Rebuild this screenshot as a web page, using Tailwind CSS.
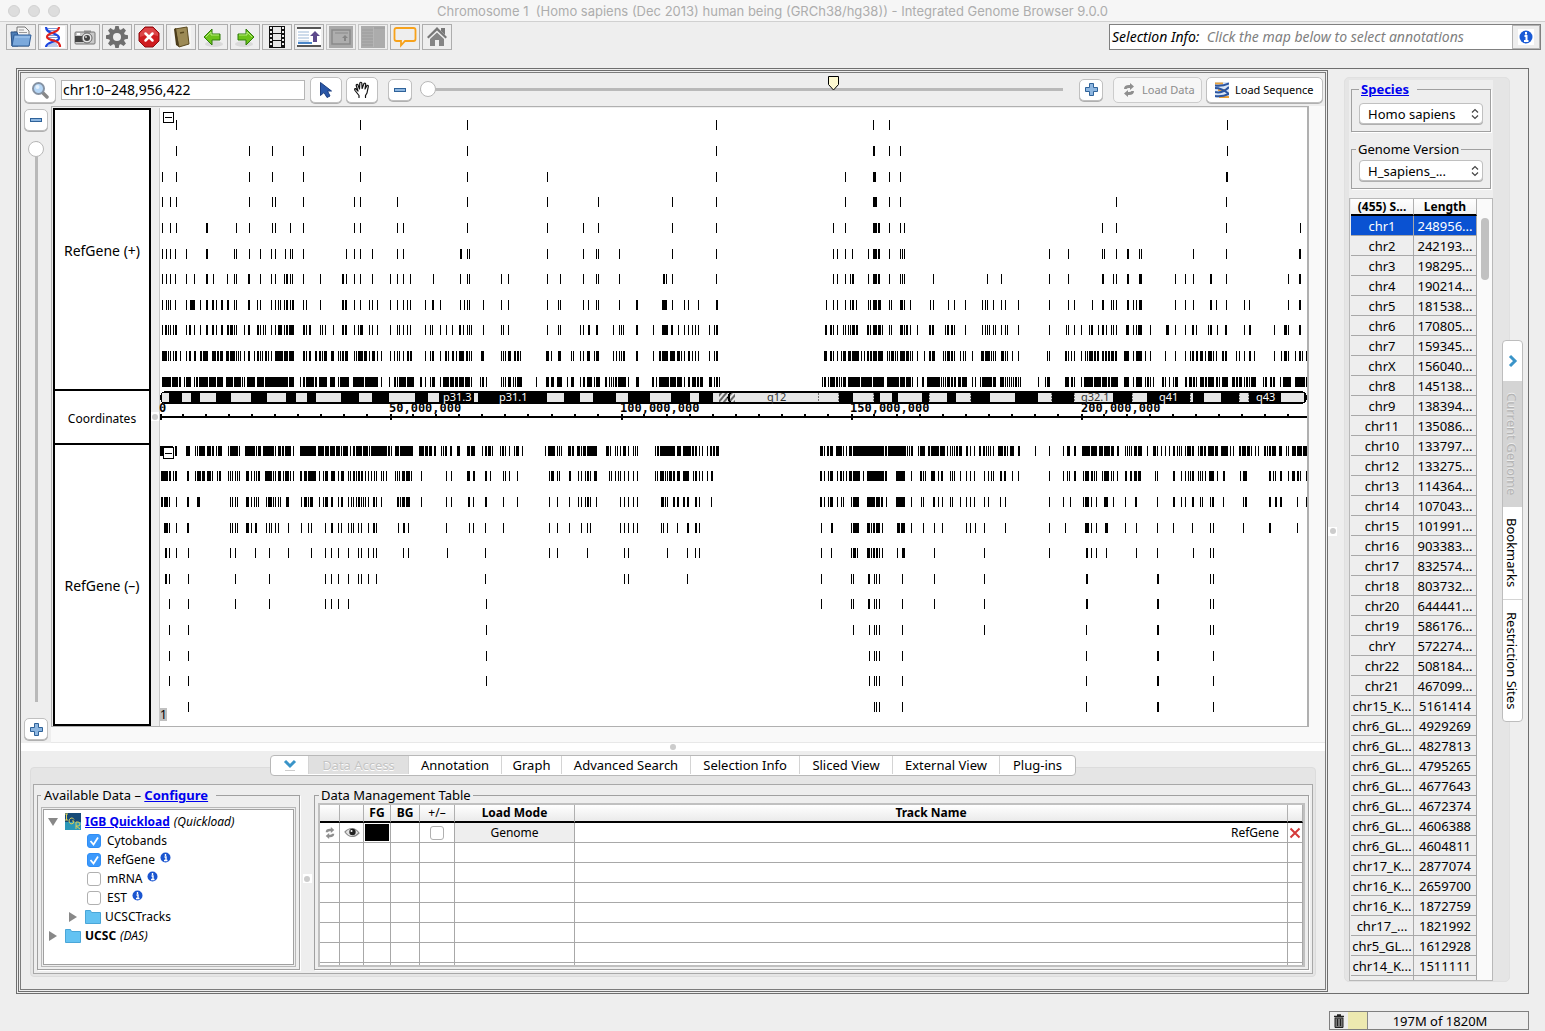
<!DOCTYPE html>
<html lang="en">
<head>
<meta charset="utf-8">
<title>Integrated Genome Browser 9.0.0</title>
<script src="https://cdn.jsdelivr.net/npm/@tailwindcss/browser@4"></script>
</head>
<body class="flex h-screen flex-col overflow-hidden bg-[#eeeeee] font-['Noto_Sans',sans-serif] text-[13px] leading-4 text-black">

<!-- Title bar -->
<header class="flex h-[22px] shrink-0 items-center border-b border-[#d0d0d0] bg-[#f6f6f6]">
  <div class="flex w-24 gap-2 pl-2">
    <span class="size-3 rounded-full border border-[#d2d2d2] bg-[#dddddd]"></span>
    <span class="size-3 rounded-full border border-[#d2d2d2] bg-[#dddddd]"></span>
    <span class="size-3 rounded-full border border-[#d2d2d2] bg-[#dddddd]"></span>
  </div>
  <h1 class="flex-1 whitespace-pre text-center font-['Inter',sans-serif] text-[13px] text-[#adadad]">Chromosome 1  (Homo sapiens (Dec 2013) human being (GRCh38/hg38)) - Integrated Genome Browser 9.0.0</h1>
  <div class="w-24"></div>
</header>

<!-- Main toolbar -->
<div class="flex h-[46px] shrink-0 items-start justify-between pt-[2px] pr-1 pl-[6px]">
  <nav class="flex gap-[2px]" aria-label="Main toolbar">
    <button aria-label="Open file" class="grid h-[26px] w-[30px] place-items-center border border-[#adadad]">
      <svg width="24" height="22" viewBox="0 0 24 22"><path d="M3 20V8l2-2h3V1h8l4 4v15z" fill="#f4f4f4" stroke="#777"/><path d="M10 4h5M10 6.500h8" stroke="#999"/><path d="M2 6h6l1 3v11H3z" fill="#4d7db5" stroke="#2c5488"/><path d="M5 9h17l-2 11H3z" fill="#7ba9dc" stroke="#2f5e9a"/><path d="M6 11h15" stroke="#a9cbef"/></svg>
    </button>
    <button aria-label="Load sequence" class="grid h-[26px] w-[30px] place-items-center border border-[#adadad]">
      <svg width="24" height="22" viewBox="0 0 24 22"><path d="M0 0h24v22H0z" fill="#fff"/><path d="M6 2.500h12M7 4.500h9M7 9.500h9M6 11.500h11M7 13.500h7M8 18h8M6 20h11" stroke="#7f9ad4"/><path d="M5 1c0 4 3 5 6 6s7 2 7 5-4 3-7 4-6 2-6 5" fill="none" stroke="#1c46e0" stroke-width="2.200"/><path d="M18 1c0 4-4 5-7 6s-5 2-5 4 4 3 8 4 5 3 5 6" fill="none" stroke="#e0201c" stroke-width="2.200"/></svg>
    </button>
    <button aria-label="Save image" class="grid h-[26px] w-[30px] place-items-center border border-[#adadad]">
      <svg width="24" height="22" viewBox="0 0 24 22"><rect x="2" y="6" width="20" height="12" rx="1" fill="#c9c9c9" stroke="#777"/><rect x="2" y="10" width="9" height="6" fill="#444"/><rect x="11" y="4.500" width="7" height="2" fill="#888"/><circle cx="14" cy="12" r="5" fill="#e8e8e8" stroke="#666"/><circle cx="14" cy="12" r="3" fill="#444"/><circle cx="13" cy="11" r="1" fill="#ccc"/><rect x="4" y="7" width="3" height="2" fill="#fff"/></svg>
    </button>
    <button aria-label="Preferences" class="grid h-[26px] w-[30px] place-items-center border border-[#adadad]">
      <svg width="24" height="24" viewBox="-12 -12 24 24"><g fill="#6f6f6f"><circle r="8"/><g id="teeth"><path d="M-2.500-7l.8-4h3.400l.8 4zM-2.500 7l.8 4h3.400l.8-4zM-7-2.500l-4 .8v3.400l4 .8zM7-2.500l4 .8v3.400l-4 .8z"/></g><use href="#teeth" transform="rotate(45)"/></g><circle r="4" fill="#eee"/></svg>
    </button>
    <button aria-label="Stop" class="grid h-[26px] w-[30px] place-items-center border border-[#adadad]">
      <svg width="22" height="22" viewBox="0 0 22 22"><path d="M7 1h8l6 6v8l-6 6H7l-6-6V7z" fill="#cf1c20" stroke="#8d0e12"/><path d="M7 2h8l5 5v3q-9-3-18 1V7z" fill="#dc4548"/><path d="M7.500 7.500l7 7m0-7l-7 7" stroke="#fff" stroke-width="2.500" stroke-linecap="round"/></svg>
    </button>
    <button aria-label="Bookmarks" class="grid h-[26px] w-[30px] place-items-center border border-[#adadad]">
      <svg width="24" height="22" viewBox="0 0 24 22"><path d="M2 0h20v22H2z" fill="#f6f6f4"/><path d="M6 3l12-2 2 17-10 3z" fill="#9c8a55" stroke="#5b4a1f"/><path d="M5 3l2-1 3 19-3-2z" fill="#4c3d1a"/><path d="M11 7l4-.8" stroke="#5b4a1f" stroke-width="1.500"/></svg>
    </button>
    <button aria-label="Back" class="grid h-[26px] w-[30px] place-items-center border border-[#adadad]">
      <svg width="24" height="22" viewBox="0 0 24 22"><ellipse cx="13" cy="18" rx="9" ry="3" fill="#d9d9d9"/><path d="M3 11l8-8v5h8v6h-8v5z" fill="#6cc31a" stroke="#2f7d0a" stroke-linejoin="round"/><path d="M5 11l5-5v3h8" fill="none" stroke="#b6ea7a"/></svg>
    </button>
    <button aria-label="Forward" class="grid h-[26px] w-[30px] place-items-center border border-[#adadad]">
      <svg width="24" height="22" viewBox="0 0 24 22"><ellipse cx="11" cy="18" rx="9" ry="3" fill="#d9d9d9"/><path d="M21 11l-8-8v5H5v6h8v5z" fill="#6cc31a" stroke="#2f7d0a" stroke-linejoin="round"/><path d="M6 9h8V6l5 5" fill="none" stroke="#b6ea7a"/></svg>
    </button>
    <button aria-label="Filmstrip" class="grid h-[26px] w-[30px] place-items-center border border-[#adadad]">
      <svg width="20" height="22" viewBox="0 0 20 22"><path d="M2 0h16v22H2z" fill="#111"/><path d="M6 1h8v6H6zM6 8h8v6H6zM6 15h8v6H6z" fill="#e8e8e8"/><path d="M4 1v20M16 1v20" stroke="#eee" stroke-width="2" stroke-dasharray="2 2"/></svg>
    </button>
    <button aria-label="Tracks up" class="grid h-[26px] w-[30px] place-items-center border border-[#adadad]">
      <svg width="24" height="22" viewBox="0 0 24 22"><path d="M0 1h24v20H0z" fill="#fff"/><path d="M0 2h24M0 20h24" stroke="#555" stroke-width="2"/><path d="M1 6h11M1 9h11M1 12h11M1 15h11" stroke="#9db8d6"/><path d="M1 17h14" stroke="#4a86c8" stroke-width="2"/><path d="M18 5l5 5h-3v6h-4v-6h-3z" fill="#5d4a8c"/></svg>
    </button>
    <button disabled aria-label="Expand window" class="grid h-[26px] w-[30px] place-items-center border border-[#c4c4c4]">
      <svg width="24" height="22" viewBox="0 0 24 22"><path d="M0 0h24v22H0z" fill="#a9a9a9"/><path d="M3 4h18v14H3z" fill="#aeaeae" stroke="#8a8a8a" stroke-width="1.500"/><path d="M6 7h13" stroke="#8a8a8a"/><path d="M16 9l3 3h-2v3h-2v-3h-2z" fill="#858585"/></svg>
    </button>
    <button disabled aria-label="Side panel" class="grid h-[26px] w-[30px] place-items-center border border-[#c4c4c4]">
      <svg width="24" height="22" viewBox="0 0 24 22"><path d="M0 0h24v22H0z" fill="#acacac"/><path d="M1 4h11M1 7h11M1 10h11M1 13h11M1 16h11M1 19h11" stroke="#9c9c9c"/><path d="M12.500 1v20" stroke="#b6b6b6"/><path d="M13 2h11" stroke="#9c9c9c"/></svg>
    </button>
    <button aria-label="Feedback" class="grid h-[26px] w-[30px] place-items-center border border-[#adadad]">
      <svg width="24" height="22" viewBox="0 0 24 22"><path d="M3.500 2h17q2 0 2 2v9q0 2-2 2H12l-4 4.500v-4.500H3.500q-2 0-2-2v-9q0-2 2-2z" fill="none" stroke="#f7a21b" stroke-width="1.800"/></svg>
    </button>
    <button aria-label="Home" class="grid h-[26px] w-[30px] place-items-center border border-[#adadad]">
      <svg width="22" height="22" viewBox="0 0 22 22"><path d="M11 1l10 10-1.500 1.500L11 4.500l-8.500 8L1 11z" fill="#777"/><path d="M15 2h4v7l-4-4z" fill="#777"/><path d="M4 13l7-6.500 7 6.500v7h-5v-6H9v6H4z" fill="#858585"/></svg>
    </button>
  </nav>
  <div class="flex h-[26px] w-[432px] border border-[#808080] bg-white">
    <p class="flex-1 self-center whitespace-pre pl-[2px] text-[14px] italic">Selection Info:  <span class="text-[#808080]">Click the map below to select annotations</span></p>
    <button aria-label="Info" class="grid w-7 place-items-center border border-[#b4b4b4] bg-[#eeeeee]">
      <svg width="16" height="16" viewBox="0 0 16 16"><path d="M0 0h16v16H0z" fill="#fff"/><circle cx="8" cy="8" r="6.500" fill="#1a5bd6" /><path d="M8 3v2.500M6.500 7h2v4M6 12h4.500" stroke="#fff" stroke-width="2" fill="none"/></svg>
    </button>
  </div>
</div>

<main class="mr-4 ml-4 flex min-h-0 flex-1 border border-[#6e6e6e]">
  <!-- Map and data panes -->
  <section class="my-px ml-px flex min-w-0 flex-1 border border-[#6e6e6e] p-px">
    <div class="flex min-w-0 flex-1 flex-col border border-[#7c7c7c]">
      <!-- Navigation row -->
      <div class="flex h-[33px] shrink-0 items-center pr-[2px] pl-[3px]">
        <button aria-label="Search" class="grid h-[26px] w-8 place-items-center rounded-[5px] border border-[#c0c0c0] bg-white shadow-[0_1px_0_#b0b0b0]">
          <svg width="18" height="18" viewBox="0 0 18 18"><path d="M11 11l5 5" stroke="#888" stroke-width="3.500" stroke-linecap="round"/><circle cx="7.500" cy="7.500" r="5.500" fill="#b5d6f6" stroke="#8592a3" stroke-width="2"/><circle cx="6.500" cy="6" r="2" fill="#e5f1fc"/></svg>
        </button>
        <input aria-label="Location" value="chr1:0–248,956,422" class="ml-[5px] h-5 w-[244px] border border-[#b5b5b5] bg-white px-px text-[14px]">
        <button aria-label="Select mode" class="ml-[5px] grid h-[26px] w-8 place-items-center rounded-[5px] border border-[#c0c0c0] bg-white shadow-[0_1px_0_#b0b0b0]">
          <svg width="14" height="18" viewBox="0 0 14 18"><path d="M1.500 1.500v13l3.500-3 3 5 3-1.500-2.500-5h4z" fill="#2a57a8" stroke="#1c3f80"/></svg>
        </button>
        <button aria-label="Scroll mode" class="ml-1 grid h-[26px] w-8 place-items-center rounded-[5px] border border-[#c0c0c0] bg-white shadow-[0_1px_0_#b0b0b0]">
          <svg width="18" height="18" viewBox="0 0 18 18" fill="none" stroke="#111" stroke-width="1.200" stroke-linejoin="round" stroke-linecap="round"><path d="M6 16.500v-2L2 9.500q-1-2 .5-2L5 10 3.200 4.500q0-1.500 1.600-1L6.500 8 6.800 2q1-1.500 2 0l.3 5.500L11 2.500q1.500-1 1.700.8L12 8l2-3.500q1.500-.5 1.300 1.200L14 12l-1.500 2.500v2"/></svg>
        </button>
        <button aria-label="Zoom out" class="ml-[10px] grid h-[22px] w-6 place-items-center rounded-[5px] border border-[#c0c0c0] bg-white shadow-[0_1px_0_#b0b0b0]">
          <svg width="12" height="4"><rect x=".5" y=".5" width="11" height="3" fill="#8db6e0" stroke="#2f6299"/></svg>
        </button>
        <div class="relative ml-2 flex h-full flex-1 items-center">
          <input type="range" aria-label="Horizontal zoom" value="0" class="h-4 w-full appearance-none bg-transparent [&::-webkit-slider-runnable-track]:h-[3px] [&::-webkit-slider-runnable-track]:bg-[#b9b9b9] [&::-webkit-slider-thumb]:-mt-[7px] [&::-webkit-slider-thumb]:size-4 [&::-webkit-slider-thumb]:appearance-none [&::-webkit-slider-thumb]:rounded-full [&::-webkit-slider-thumb]:border [&::-webkit-slider-thumb]:border-[#b8b8b8] [&::-webkit-slider-thumb]:bg-white">
          <svg class="absolute top-[3px] left-[63.4%]" width="12" height="16" viewBox="0 0 12 16"><path d="M.5.500h10v8l-5 5.500-5-5.500z" fill="#fdf9d0" stroke="#000"/></svg>
        </div>
        <button aria-label="Zoom in" class="ml-4 grid h-[22px] w-6 place-items-center rounded-[5px] border border-[#c0c0c0] bg-white shadow-[0_1px_0_#b0b0b0]">
          <svg width="13" height="13"><path d="M4.500.500h4v4h4v4h-4v4h-4v-4h-4v-4h4z" fill="#8db6e0" stroke="#2f6299"/></svg>
        </button>
        <button disabled class="ml-[10px] flex h-[26px] w-[89px] items-center gap-[6px] rounded-[5px] border border-[#cccccc] bg-[#f6f6f6] pl-2 text-[11px] text-[#8c8c8c]">
          <svg width="14" height="14" viewBox="0 0 14 14"><path d="M2 6Q2 2 7 2h1V0l4 3.500L8 7V5H7Q5 5 4.500 6zM12 8q0 4-5 4H6v2l-4-3.500L6 7v2h1q2 0 2.500-1z" fill="#8f8f8f"/></svg>
          <span class="whitespace-nowrap">Load Data</span>
        </button>
        <button class="ml-1 flex h-[26px] w-[117px] items-center gap-[6px] rounded-[5px] border border-[#c0c0c0] bg-white pl-2 text-[11px] shadow-[0_1px_0_#b0b0b0]">
          <svg width="14" height="16" viewBox="0 0 14 16"><path d="M0 0h14v16H0z" fill="#d9e6f7"/><path d="M0 1.500h8M3 8h8M4 15h10" stroke="#eaa13a" stroke-width="2"/><path d="M0 3.500q7 1 14-2M0 6q7 0 14 6M0 10q7 2 14-5M0 14q7 1 14-2" stroke="#2c55a0" stroke-width="2" fill="none"/></svg>
          <span class="whitespace-nowrap">Load Sequence</span>
        </button>
      </div>

      <div class="flex min-h-0 flex-1">
        <!-- Vertical zoom -->
        <div class="flex w-[30px] shrink-0 flex-col items-center pt-[3px] pb-[3px]">
          <button aria-label="Vertical zoom out" class="grid h-[22px] w-6 place-items-center rounded-[5px] border border-[#c0c0c0] bg-white shadow-[0_1px_0_#b0b0b0]">
            <svg width="12" height="4"><rect x=".5" y=".5" width="11" height="3" fill="#8db6e0" stroke="#2f6299"/></svg>
          </button>
          <input type="range" aria-label="Vertical zoom" value="0" class="mt-[10px] mb-4 min-h-0 w-4 flex-1 appearance-none bg-transparent [writing-mode:vertical-lr] [&::-webkit-slider-runnable-track]:w-[3px] [&::-webkit-slider-runnable-track]:bg-[#b9b9b9] [&::-webkit-slider-thumb]:-ml-[7px] [&::-webkit-slider-thumb]:size-4 [&::-webkit-slider-thumb]:appearance-none [&::-webkit-slider-thumb]:rounded-full [&::-webkit-slider-thumb]:border [&::-webkit-slider-thumb]:border-[#b8b8b8] [&::-webkit-slider-thumb]:bg-white">
          <button aria-label="Vertical zoom in" class="grid h-[22px] w-6 shrink-0 place-items-center rounded-[5px] border border-[#c0c0c0] bg-white shadow-[0_1px_0_#b0b0b0]">
            <svg width="13" height="13"><path d="M4.500.500h4v4h4v4h-4v4h-4v-4h-4v-4h4z" fill="#8db6e0" stroke="#2f6299"/></svg>
          </button>
        </div>
        <div class="flex min-w-0 flex-1 flex-col">
          <div class="flex min-h-0 flex-1">
            <div class="flex min-w-0 flex-1 border-t border-r-2 border-b border-l border-[#b0b0b0] pt-px">
              <!-- Track labels -->
              <div class="ml-px flex w-[98px] shrink-0 flex-col">
                <div class="grid flex-[282] place-items-center border-2 border-b-[1px] border-black bg-white pt-[2px] text-[14px]">RefGene (+)</div>
                <div class="grid h-[54px] shrink-0 place-items-center border-2 border-y-[1px] border-black bg-white pt-1 text-[12px]">Coordinates</div>
                <div class="grid flex-[281] place-items-center border-2 border-t-[1px] border-black bg-white pt-[2px] text-[14px]">RefGene (–)</div>
              </div>
              <div class="flex w-[9px] shrink-0 items-center border-r border-[#c8c8c8]">
                <span class="mb-[1px] grid h-[9px] w-2 place-items-center bg-white"><span class="size-[6px] rounded-full bg-[#cccccc]"></span></span>
              </div>
              <!-- Genome map -->
              <div class="relative min-w-0 flex-1 bg-white">
                <svg id="map" class="absolute inset-0 size-full" viewBox="160 108 1147 618" preserveAspectRatio="none" shape-rendering="crispEdges" role="img" aria-label="Gene annotations on chromosome 1">
                  <defs><pattern id="hatch" width="4" height="4" patternUnits="userSpaceOnUse" patternTransform="rotate(40)"><path d="M0 0h2v4H0z" fill="#666"/></pattern></defs>
                  <path id="genes" fill="#000"/>
                  <rect x="160" y="391" width="1147" height="13" rx="6" fill="#000"/>
                  <path id="bands" fill="#e6e6e6"/>
                  <rect x="719" y="393" width="16" height="9" fill="url(#hatch)"/>
                  <path d="M731 392q-5 5.500 0 11" fill="none" stroke="#000" stroke-width="2"/>
                  <path d="M818.500 393v9M838.500 393v9M873.500 393v9M929.500 393v9M970.500 393v9M1051.500 393v9M1074.500 393v9M1132.500 393v9M1190.500 393v9M1239.500 393v9M1248.500 393v9" stroke="#777" stroke-dasharray="2 1"/>
                  <path d="M160 416h1147v2H160z"/>
                  <path id="ticks"/>
                  <path d="M163.500 112.500h10v10h-10zM163.500 447.500h10v11h-10z" fill="#fff" stroke="#000"/>
                  <path d="M165 117.500h7M165 453.500h7" stroke="#000"/>
                </svg>
                <div id="labels"></div>
                <span class="absolute bottom-[5px] left-0 h-[13px] w-[7px] bg-[#c0c0c0] text-[12px] leading-[14px]">1</span>
              </div>
            </div>
            <div class="w-4 shrink-0 bg-[#f9f9f9]"></div>
          </div>
          <div class="h-4 shrink-0 border-b border-[#e8e8e8] bg-[#f9f9f9]"></div>
        </div>
      </div>

      <div class="grid h-2 shrink-0 place-items-center bg-white"><span class="size-[6px] rounded-full bg-[#cccccc]"></span></div>

      <!-- Data access panel -->
      <div class="flex h-[238px] shrink-0 flex-col px-[9px] pt-1 pb-3">
        <div role="tablist" class="z-10 mx-auto flex h-[21px] shrink-0 divide-x divide-[#d4d4d4] overflow-hidden rounded-[4px] border border-[#b8b8b8] bg-white pb-px">
          <button aria-label="Collapse" class="grid w-[38px] place-items-center"><svg width="14" height="14" viewBox="0 0 14 14"><path d="M2 3l5 5 5-5" fill="none" stroke="#3a94c8" stroke-width="3"/><path d="M2 12.500h10" stroke="#ccc"/></svg></button>
          <button role="tab" aria-selected="true" class="w-[100px] bg-[#e0e0e0] text-[#c4c4c4] [text-shadow:0_1px_0_#fff]">Data Access</button>
          <button role="tab" class="w-[93px]">Annotation</button>
          <button role="tab" class="w-[60px]">Graph</button>
          <button role="tab" class="w-[129px]">Advanced Search</button>
          <button role="tab" class="w-[109px]">Selection Info</button>
          <button role="tab" class="w-[93px]">Sliced View</button>
          <button role="tab" class="w-[107px]">External View</button>
          <button role="tab" class="w-[75px]">Plug-ins</button>
        </div>
        <div class="-mt-[9px] flex min-h-0 flex-1 flex-col rounded-[4px] border border-[#dcdcdc] bg-[#e5e5e5] px-[2px] pt-4 pb-[2px]">
          <div class="flex min-h-0 flex-1 border border-[#a8a8a8] bg-[#eeeeee] p-[3px] pt-[2px]">
            <fieldset class="flex w-[263px] shrink-0 flex-col border border-[#a0a0a0] px-[3px] pb-[2px] shadow-[1px_1px_0_#fff]">
              <legend class="whitespace-pre pr-2 pl-[3px]">Available Data – <a href="#" class="font-bold text-[#0000ee] underline">Configure</a></legend>
              <div class="mt-1 flex min-h-0 flex-1 border border-[#b8b8b8] p-px">
                <ul class="flex-1 border border-[#a0a0a0] bg-white pt-[2px] leading-[19px]">
                  <li class="flex h-[19px] items-center pl-1"><svg width="10" height="10"><path d="M0 1h10L5 9z" fill="#888"/></svg>
                    <svg class="ml-[7px]" width="16" height="17" viewBox="0 0 16 17"><path d="M0 0h16v17H0z" fill="#154a78"/><path d="M0 9h16v8H0z" fill="#2a97b8"/><path d="M0 1h3M1.500 1v6M0 7h3M9 6.500q-1-2-3-1.500-2 1-2 3t2 3q3 0 3-3H7M11 16V9h2q2 0 2 2t-2 2h-2l4 3" stroke="#d8cf5a" fill="none"/></svg>
                    <a href="#" class="ml-1 text-[12px] font-bold text-[#0000ee] underline">IGB Quickload</a><i class="ml-1 text-[12px]">(Quickload)</i></li>
                  <li class="flex h-[19px] items-center pl-[43px]"><input id="c1" type="checkbox" checked class="peer size-[14px] appearance-none rounded-[3px] border border-[#b0b0b0] bg-white checked:border-[#2f8df5] checked:bg-[#3c99fc]"><svg class="pointer-events-none -ml-[14px]" width="14" height="14"><path d="M3.500 7l3 3.500 4.500-7" fill="none" stroke="#fff" stroke-width="1.800"/></svg><label for="c1" class="ml-[6px] text-[12px]">Cytobands</label></li>
                  <li class="flex h-[19px] items-center pl-[43px]"><input id="c2" type="checkbox" checked class="peer size-[14px] appearance-none rounded-[3px] border border-[#b0b0b0] bg-white checked:border-[#2f8df5] checked:bg-[#3c99fc]"><svg class="pointer-events-none -ml-[14px]" width="14" height="14"><path d="M3.500 7l3 3.500 4.500-7" fill="none" stroke="#fff" stroke-width="1.800"/></svg><label for="c2" class="ml-[6px] text-[12px]">RefGene</label><svg class="mb-1 ml-[5px]" width="11" height="11"><circle cx="5.500" cy="5.500" r="5" fill="#1a55d0"/><path d="M5.500 2v2M4.500 5h1.500v3M4 8.500h3.500" stroke="#fff" stroke-width="1.400" fill="none"/></svg></li>
                  <li class="flex h-[19px] items-center pl-[43px]"><input id="c3" type="checkbox" class="size-[14px] appearance-none rounded-[3px] border border-[#b0b0b0] bg-white checked:bg-[#3c99fc]"><label for="c3" class="ml-[6px] text-[12px]">mRNA</label><svg class="mb-1 ml-[5px]" width="11" height="11"><circle cx="5.500" cy="5.500" r="5" fill="#1a55d0"/><path d="M5.500 2v2M4.500 5h1.500v3M4 8.500h3.500" stroke="#fff" stroke-width="1.400" fill="none"/></svg></li>
                  <li class="flex h-[19px] items-center pl-[43px]"><input id="c4" type="checkbox" class="size-[14px] appearance-none rounded-[3px] border border-[#b0b0b0] bg-white checked:bg-[#3c99fc]"><label for="c4" class="ml-[6px] text-[12px]">EST</label><svg class="mb-1 ml-[5px]" width="11" height="11"><circle cx="5.500" cy="5.500" r="5" fill="#1a55d0"/><path d="M5.500 2v2M4.500 5h1.500v3M4 8.500h3.500" stroke="#fff" stroke-width="1.400" fill="none"/></svg></li>
                  <li class="flex h-[19px] items-center pl-6 text-[12px]"><svg width="10" height="10"><path d="M1 0v10l8-5z" fill="#888"/></svg><svg class="mr-1 ml-[7px]" width="16" height="14"><path d="M.5.500h5l1 2h9v11H.5z" fill="#63c2f2" stroke="#4aa6d8"/></svg>UCSCTracks</li>
                  <li class="flex h-[19px] items-center pl-1 text-[12px]"><svg width="10" height="10"><path d="M1 0v10l8-5z" fill="#888"/></svg><svg class="mr-1 ml-[7px]" width="16" height="14"><path d="M.5.500h5l1 2h9v11H.5z" fill="#63c2f2" stroke="#4aa6d8"/></svg><b>UCSC</b><i class="ml-1">(DAS)</i></li>
                </ul>
              </div>
            </fieldset>
            <div class="flex w-[14px] shrink-0 items-center justify-center"><span class="grid size-[9px] place-items-center bg-white"><span class="size-[6px] rounded-full bg-[#cccccc]"></span></span></div>
            <fieldset class="flex min-w-0 flex-1 flex-col border border-[#a0a0a0] px-[3px] pb-[2px] shadow-[1px_1px_0_#fff]">
              <legend class="ml-px px-[2px]">Data Management Table</legend>
              <div class="min-h-0 flex-1 overflow-hidden border-2 border-[#c0c0c0] bg-white">
                <table class="w-full table-fixed border-separate border-spacing-0 text-[12px]">
                  <colgroup><col class="w-5"><col class="w-6"><col class="w-[27px]"><col class="w-[29px]"><col class="w-[35px]"><col class="w-[120px]"><col><col class="w-[15px]"></colgroup>
                  <thead><tr class="h-[18px] bg-gradient-to-b from-white to-[#e8e8e8] leading-4">
                    <th class="border-r border-b-2 border-r-[#b0b0b0] border-b-black"></th><th class="border-r border-b-2 border-r-[#b0b0b0] border-b-black"></th><th class="border-r border-b-2 border-r-[#b0b0b0] border-b-black">FG</th><th class="border-r border-b-2 border-r-[#b0b0b0] border-b-black">BG</th><th class="border-r border-b-2 border-r-[#b0b0b0] border-b-black font-normal">+/–</th><th class="border-r border-b-2 border-r-[#b0b0b0] border-b-black">Load Mode</th><th class="border-r border-b-2 border-r-[#b0b0b0] border-b-black">Track Name</th><th class="border-r border-b-2 border-r-[#b0b0b0] border-b-black"></th>
                  </tr></thead>
                  <tbody id="tracks"><tr class="h-5">
                    <td class="border-r border-b border-[#a8a8a8]"><svg class="mx-auto" width="12" height="12" viewBox="0 0 14 14"><path d="M2 6Q2 2 7 2h1V0l4 3.500L8 7V5H7Q5 5 4.500 6zM12 8q0 4-5 4H6v2l-4-3.500L6 7v2h1q2 0 2.500-1z" fill="#8f8f8f"/></svg></td>
                    <td class="border-r border-b border-[#a8a8a8]"><svg class="mx-auto" width="16" height="12" viewBox="0 0 16 12"><path d="M1 5q3-3.500 7-3.500T15 6q-3 3.500-7 3.500T1 5z" fill="#e4e4e4" stroke="#8a8a8a" stroke-width="1.200"/><circle cx="8.500" cy="5" r="3.200" fill="#222"/><circle cx="7.500" cy="4" r="1" fill="#fff"/></svg></td>
                    <td class="border-r border-b border-[#a8a8a8] p-px"><div class="h-[17px] bg-black"></div></td>
                    <td class="border-r border-b border-[#a8a8a8]"></td>
                    <td class="border-r border-b border-[#a8a8a8]"><input type="checkbox" aria-label="Combine strands" class="mx-auto block size-[14px] appearance-none rounded-[3px] border border-[#b0b0b0] bg-white"></td>
                    <td class="border-r border-b border-[#a8a8a8] bg-[#eeeeee] text-center">Genome</td>
                    <td class="border-r border-b border-[#a8a8a8] pr-2 text-right">RefGene</td>
                    <td class="border-r border-b border-[#a8a8a8]"><svg class="mx-auto" width="12" height="12"><path d="M1.500 1.500l9 9m0-9l-9 9" stroke="#d43a3a" stroke-width="2"/></svg></td>
                  </tr></tbody>
                </table>
              </div>
            </fieldset>
          </div>
        </div>
      </div>
    </div>
  </section>

  <div class="flex w-4 shrink-0 items-center"><span class="grid size-[9px] place-items-center bg-white"><span class="size-[6px] rounded-full bg-[#cccccc]"></span></span></div>

  <!-- Current genome panel -->
  <aside class="mt-2 mb-[11px] flex w-[166px] shrink-0 rounded-[5px] border border-[#e0e0e0] bg-[#e5e5e5] pt-[2px] pr-4 pl-1">
    <div class="flex min-w-0 flex-1 flex-col bg-[#eeeeee]">
      <fieldset class="mx-[2px] mt-px h-[51px] border border-[#a0a0a0] px-[7px] pt-[6px] shadow-[1px_1px_0_#fff]">
        <legend class="pr-2 pl-[2px]"><a href="#" class="font-bold text-[#0000ee] underline">Species</a></legend>
        <div class="relative">
          <select aria-label="Species" class="h-[21px] w-full appearance-none rounded-[4px] border border-[#c0c0c0] bg-white pl-2 shadow-[0_1px_0_#b0b0b0]"><option>Homo sapiens</option></select>
          <svg class="pointer-events-none absolute top-[5px] right-[4px]" width="8" height="12"><path d="M1 4.500L4 1.500l3 3M1 7.500l3 3 3-3" fill="none" stroke="#444" stroke-width="1.200"/></svg>
        </div>
      </fieldset>
      <fieldset class="mx-[2px] mt-[9px] h-[48px] border border-[#a0a0a0] px-[7px] pt-[3px] shadow-[1px_1px_0_#fff]">
        <legend class="-ml-[3px] px-[2px]">Genome Version</legend>
        <div class="relative">
          <select aria-label="Genome Version" class="h-[21px] w-full appearance-none rounded-[4px] border border-[#c0c0c0] bg-white pl-2 shadow-[0_1px_0_#b0b0b0]"><option>H_sapiens_...</option></select>
          <svg class="pointer-events-none absolute top-[5px] right-[4px]" width="8" height="12"><path d="M1 4.500L4 1.500l3 3M1 7.500l3 3 3-3" fill="none" stroke="#444" stroke-width="1.200"/></svg>
        </div>
      </fieldset>
      <div class="mt-[9px] flex min-h-0 flex-1 overflow-hidden border border-[#b8b8b8] pl-px">
        <table class="h-fit w-[126px] shrink-0 table-fixed border-separate border-spacing-0 text-center">
          <thead><tr class="h-[17px] bg-gradient-to-b from-white to-[#f0f0f0] text-[12px] leading-[15px]"><th class="border-r border-b-2 border-r-[#b0b0b0] border-b-black">(455) S...</th><th class="border-r border-b-2 border-r-[#b0b0b0] border-b-black">Length</th></tr></thead>
          <tbody id="seqs"></tbody>
        </table>
        <div class="flex-1 bg-[#fafafa] pt-[19px] pl-1"><div class="h-[62px] w-2 rounded-full bg-[#c1c1c1]"></div></div>
      </div>
    </div>
  </aside>
  <div role="tablist" class="z-10 mr-[5px] -ml-2 flex w-[21px] shrink-0 flex-col self-center overflow-hidden rounded-[4px] border border-[#bdbdbd] bg-white">
    <button aria-label="Collapse" class="grid h-10 place-items-center"><svg width="14" height="14" viewBox="0 0 14 14"><path d="M4 2l5 5-5 5" fill="none" stroke="#3a94c8" stroke-width="3"/></svg></button>
    <button role="tab" aria-selected="true" class="grid h-[126px] place-items-center bg-[#d4d4d4] pr-[2px] text-[#b4b4b4] [text-shadow:-1px_0_0_#eee] [writing-mode:vertical-rl]">Current Genome</button>
    <button role="tab" class="grid h-[93px] place-items-center border-b border-[#d4d4d4] pr-[2px] [writing-mode:vertical-rl]">Bookmarks</button>
    <button role="tab" class="grid h-[121px] place-items-center pr-[2px] [writing-mode:vertical-rl]">Restriction Sites</button>
  </div>
</main>

<!-- Memory status -->
<footer class="flex h-[37px] shrink-0 items-end justify-end pr-4 pb-px">
  <div class="flex h-[19px] w-[200px] items-center border border-[#808080]">
    <button aria-label="Free memory" class="ml-[3px]"><svg width="12" height="14" viewBox="0 0 12 14"><path d="M4 1h4M1 2.500h10" stroke="#222" stroke-width="1.500"/><path d="M2 4h8v9.500H2z" fill="#777" stroke="#222"/><path d="M4.500 5v7M7.500 5v7" stroke="#222"/></svg></button>
    <span class="ml-[3px] h-full w-5 border-r border-[#888888] bg-[#ede9b0]"></span>
    <span class="flex-1 pr-4 text-center">197M of 1820M</span>
  </div>
</footer>

<script>
// Gene glyphs: each row is [y, four map tiles]; tiles list glyphs in thirds of a pixel, a single number being a hairline.
const tileX = [150, 440, 800, 1050];
const rows = [
[120,'79 631','82 829','220 268','532'],
[146,'79 298 367 460 631','82 829','219-225 268 301','532'],
[172,'37 79 298 367 460 631','82 322 829','136 219-228 268 301','528-534'],
[197,'37 61 79 298 367 376 460 613 631 742','82 322 475 697 829','136 219-231 268 301','199 529'],
[223,'37 61 79 168-174 259 298 367 376 421 460 613 631 742 760','82 322 430 475 697 829','100 136 219-231 234-240 268 301 313','157 199 529 751'],
[249,'37 49 61 76 109 168-174 253 259 298 331 364 376 406 421 427 460 589 613 631 667 742 760','60-66 82 88 322 430 469 475 538 697 829','100 112 136 157 205 219-231 234-240 268 301 307 313 748','55 157 163 199 231-237 268 274 430 529 747-753'],
[274,'37 49 61 76 109 133 168-174 190 232 253 259 294-300 331 364 376 403 408-414 421 427 460 511 576-582 589 613 631 667 721 742 760 781 850','61 82 88 184 205 322 361 430 469 475 538 669-675 679 697 829','100 112 136 151 156-162 205 219-231 234-240 268 301 307 313 400 562 604 748','55 156-162 190 199 231-237 267-276 376 406 430 480-486 529 715 747-753'],
[300,'37 49 55 61 76 109 120-135 151 168-174 186-192 199 213-219 231-237 253 259 294-300 322 331 364 376 385 391 403 408-414 421 426-432 460 469 511 576-582 585-591 613 631 658 667 682 721 742 760 772 781 826 846-852 871','1 61 73 82 88 130 184 205 322 355 361 430 445 469 475 538 588-594 666-681 697 733 745 775 828-834','79 100 112 136 151 156-162 169 205 211 219-231 234-243 268 274 300-309 313 331 391 400 445 463 496 547 556 562 580 604 616 655 748','55 73 127 156-162 184 190 199 231-237 250 259 267-276 376 406 430 480-486 499 529 583 598 715 747-753'],
[325,'37 45-51 55 61 70 75-81 109 117-123 133 151 168-174 186-192 199 213-219 231-237 240-249 253 259 283 294-300 321-327 331 340 346 364 376 384-396 403 408-414 417-432 459-465 469 477-483 511 517 526 550 576-582 585-591 613 625 630-639 658 667 682 721 742 748 760 772 781 826 841 847 871 889','1 19 37 57-63 70 82 88 94 130 184 190 205 322 355 361 421 430 444-450 468-474 520 538 544 550 588-594 640 666-684 693-699 715 733 745 757 766 775 808 823 828-834','75-81 90-96 100 112 130 136 145 151 156-165 168-174 201-207 211 219-231 234-243 247 268 274 300-309 313 318-324 331 352 387-393 396-402 436 441-447 453-459 463 496 547 556 562 568 580 586 604 616 622 655 748','49 55 73 94 118 123-129 145 156-162 169 184 190 199 228-237 250 259 264-276 301 348-357 376 406 426-432 439 475 480-486 502 525-531 583 597-603 673 702-711 715 747-753'],
[351,'36-51 55 61 70 75-81 91 109 117-123 132-138 150-156 159-174 186-198 201-207 210-219 228-237 240-255 259 265 271 283 294-300 313 321-327 331 337 346-351 355 364 375-399 402-414 417-432 459-465 469 477-483 495-501 508-514 517 522-531 543-552 565 571 576-582 585-594 613 619 624-639 642-651 658 667-675 682 694 721 733 742 748 760 771-777 780-786 826 841 846-852 871 885-891 895','1 15-21 25 36-42 49 57-72 78-84 88 94 123-132 184 190 196 204-213 222-228 231-237 241 318-327 334 354-363 394 400 421 430 441-450 463 468-477 520 529 538 544 549-555 588-594 640 657-663 666-684 690-705 711-720 724 733 744-750 757 766 775 808 823 828-834','72-81 90-96 100 112 124 130-138 144-153 156-177 184 193 201-207 210-216 219-231 234-249 262 268 273-282 286 292 300-315 318-327 331 337 352 373 387-393 396-405 430 436 441-450 453-459 463 481 490 496 517 543-552 555-570 574 580 586 603-612 616 622 637 655 742 748','45-51 55 64 73 94 106 112 117-129 132-138 141-147 156-162 165-171 174-180 183-192 195-201 222-237 250 258-276 286 301 346 376 406 421 426-432 438-444 450-459 465 474-486 490 499 516-522 525-531 559 568 583 597-603 613 673 694 702-711 715 736 747-753 757 769'],
[377,'36-63 66-84 87-93 103 108-123 133 139 142 147-174 177-198 201-219 228-249 252-273 277 283 291-315 321-342 345-414 417-432 451 459-465 468-492 495-501 507-531 540-555 565 571-597 609-642 645-684 694 718 732-738 741 747-768 771-792 810-816 826 841 846-855 871 879-885 885-897','1 10 15-27 30-42 45-54 57-72 75-90 94 121 126-132 139 184 190 196 204-213 220 226 231-246 289 318-327 333-342 351-366 382 393-402 421 430-435 441-456 463 468-480 495-501 508 514 520 525-531 534-558 565 588-597 636-642 649 657-687 690-708 711-726 733 744-750 756-768 771-777 780-789 807-816 823 828-834 838','67 72-78 85 90-105 108-114 118 124 130-138 144-180 183-216 219-252 261-297 300-315 318-333 337 352 366-372 381-420 424 430 436 441-450 453-459 463-468 474-483 486-501 517 526 541 546-576 579-588 600-612 616 622 628 634 640 645-651 655 661 715 736 741-750','45-57 63-69 73 94 102-129 132-153 156-171 174-180 183-204 222-237 250 258-276 286 291-297 301 310 336-342 346 358 370 375-384 405-411 417-426 429-435 439 450-462 465-471 474-492 498-504 508 516-534 546-555 558-564 568-576 583 588-594 598 603 606-618 640 645-651 660-666 669-675 691 699-723 735-765 769'],
[446,'31-69 75-81 108-120 136 142 147-165 171-183 186-192 199 204-216 235 240-264 268 285-315 319 324-333 339-372 376 384-393 396-402 405-423 430 450-498 504-522 525-537 540-555 558-570 574 579-585 587-597 601 609-615 618 621-636 639-654 657-660 663-711 714-720 724 735-741 741-747 750-789 807-822 825-834 837-846 852-858 874 880 885-891','4 10 15-21 30-36 51-60 81-90 93-105 127 135-141 144-153 157 181 186-192 196 208 223 228-237 247 316 324-345 351 358 364 384-393 396-402 411-420 423 429-438 441-471 498-507 511 526 532 541 549-558 565 580 586 592 646 651-657 660-705 711-723 729-753 756-762 765-771 778 787 802 810-816 819-825 828-837','60-69 73 81-87 90-99 108-126 130 139 147-156 159-252 255-261 264-318 322 328 333-339 355 360-375 384-390 393-417 420-435 442 451 457 463 468-474 477-486 498-504 511 523 537-543 549-555 559 565 571 580 594-609 612-618 622 630-642 654-660 706 748','40 51-60 72-78 96-120 123-141 147-159 162-180 183-192 201-207 226 232 238 243 252-261 264-276 292 309-318 322 334 346 358 369-375 382 388 394 406 411-423 426-432 444 450-459 462-468 474-492 495-504 513-534 541 550 568-573 576-588 591-600 604 616 625 642-648 652 657-663 666-678 687-696 709 715 726-738 741-756 759-771'],
[471,'33-54 57-63 70 75-81 111-117 136 141-153 156-165 171-183 187 202 207-213 235 241 247 256 262 268 288-297 304 313 319 324-330 345-366 370 376 384-393 400 405-417 421 430 450-456 462-471 474-498 508 520 525-534 543-555 565 573-582 595 601 609-615 619 624-630 633-639 646 655 664 673 679 694 700 709 736 742 748 756-765 768-780 784 814 889','19 34 81-90 99-105 135-141 151 190 196 208 232 328 333-342 352 358 387-393 415 424 435 441-447 451 462-471 508 514 526 535 541 553 565 580 592 646 652 660-672 676 682 687-696 699-705 711-720 729-747 760 766-771 778 787 802 813-819','60-66 73 85 90-99 112 120-126 130 139 147-156 159-180 190 201-252 255-261 288-315 334 360-366 370 376 393-405 415 423-429 451 457 463 481 499 511 523 553 565 574 580 600-606 612-618 637 655 748','40 52 58 72-78 100 105-117 123-129 133 139 157 162-177 184 190 202 225-231 240-246 252-261 264-273 316 322 369-375 394 406 415 421 426-432 445 451 457 465 477-492 502 519-525 571 579-591 657-663 670 676 690-696 715 726-735 741-747 751 769'],
[497,'33-39 42-54 58 79 111-117 141-150 241 247 256 262 288-297 304 313 319 325 349 354-366 370 376 385 391 408-417 454 462-471 474 480-489 508 520 525-534 543-549 565 573-579 595 604 610 619 624-630 634 640 646 655 669-675 679 694 741-747 751 756-765 768-780 814 889','19 34 84-90 100 135-141 190 232 328 352 388 415 424 436 441-447 451 469 541 553 565 580 592 663-672 676 682 699-705 711-717 729-735 741-747 765-771 778 814','60-66 73 85 90-99 112 124 130 154 159-177 201-225 228-240 243-249 259 288-315 334 364 370 399-405 415 427 451 457 481 499 511 523 553 565 601 616 748','40 61 100 105-117 124 139 162-174 190 226 255-261 322 369-375 394 406 426-432 451 457 481 486-492 520 580 585-591 657-663 675-681 690-696 742 769'],
[523,'42-54 58 79 111-117 241 247 256 262 288-297 304 315-321 349 358 364 376 385 415 454 475 484 526 543-549 565 574 595 604 610 625 634 655 669-675 679 745 759-765 775 889','19 88 100 136 190 328 352 388 424 442 451 541 553 565 580 592 664 670 682 712 741-747 765-771 778','64 93-99 154 159-177 201-210 213 219-225 228-240 247 291-300 303-315 334 370 403 427 499 511 526 553 616 748','46 105-117 124 139 165-174 226 259 322 370 427 481 490 580 657-663 742'],
[548,'45-51 58 79 115 241 256 316 358 415 484 526 544 565 595 625 634 655 670 679 760 775 892','22 136 328 352 442 553 565 682 742 766 778','64 94 154 159-168 172 201-210 213 219-225 228-234 238 247 292 306-315 403 553 748','108-114 124 139 169 259 322 430 481 490'],
[574,'45-51 58 115 256 358 526 544 565 595 625 634 655 679','136 553 565 742','64 154 160 204-210 223 229 238 307 403 553','108-114 321-327 481 490'],
[599,'58 115 256 358 526 544 565 595','139','64 154 160 204-210 223 229 238 307 403 553','108-114 321-327 481 490'],
[625,'58 115','139','160 208 223 229 238 307 553','109 321-327 481 490'],
[651,'58 115','139','208 223 229 238 307','109 321-327 490'],
[676,'58 115','139','208 223 229 238 307','109 321-327 490'],
[702,'115','','223 229 238 307','109 321-327 490']
];
const boxes = (tiles, y, h) => tiles.map((list, i) => list.split(' ').filter(Boolean).map(t => {
  const [a, b] = t.split('-').map(Number);
  const x0 = tileX[i] + Math.floor(a / 3), w = b ? Math.max(1, Math.round((b - a) / 3)) : 1;
  return `M${x0} ${y}h${w}v${h}h-${w}z`;
}).join('')).join('');
document.getElementById('genes').setAttribute('d', rows.map(([y, ...tiles]) => boxes(tiles, y, 10)).join(''));
document.getElementById('bands').setAttribute('d', boxes([
  '36-57 96-123 150-198 243-303 351-408 438-471 498-573 627-666 717-795 834-867',
  '102-114 321-372 420-459 528-564 630-693 750-777 819-1080',
  '0-117 159-222 240-276 294-366 387-441 468-513 570-645 714-756',
  '72-189 246-291 420-429 462-513 567-597 693-762'], 393, 9));
let ticks = '';
for (let i = 0; i < 50; i++) {
  const x = Math.round(160 + i * 23.030);
  ticks += i % 10 ? `M${x - 1} 414h2v2h-2z` : `M${x} 414h2v6h-2z`;
}
document.getElementById('ticks').setAttribute('d', ticks);

// Map labels: [x, text]
const pct = (v, from, size) => ((v - from) / size * 100) + '%';
const place = (list, y, cls) => list.map(([x, t, c = '']) =>
  `<span class="absolute whitespace-nowrap ${cls} ${c}" style="left:${pct(x, 160, 1147)};top:${pct(y, 108, 618)}">${t}</span>`).join('');
document.getElementById('labels').innerHTML =
  place([[159, '0'], [389, '50,000,000'], [620, '100,000,000'], [850, '150,000,000'], [1081, '200,000,000']], 401, "font-['DejaVu_Sans_Mono',monospace] text-[12px] font-bold leading-[14px]") +
  place([[443, 'p31.3', 'text-white'], [499, 'p31.1', 'text-white'], [767, 'q12', 'text-[#333333]'], [1081, 'q32.1', 'text-[#333333]'], [1159, 'q41', 'text-white'], [1256, 'q43', 'text-white']], 390, 'text-[11px] leading-[14px]');

// Empty rows of the data management table
document.getElementById('tracks').insertAdjacentHTML('beforeend',
  ('<tr class="h-5">' + '<td class="border-r border-b border-[#a8a8a8]"></td>'.repeat(8) + '</tr>').repeat(7));

// Sequences with their lengths
const seqs = `chr1 248956...|chr2 242193...|chr3 198295...|chr4 190214...|chr5 181538...|chr6 170805...|chr7 159345...|chrX 156040...|chr8 145138...|chr9 138394...|chr11 135086...|chr10 133797...|chr12 133275...|chr13 114364...|chr14 107043...|chr15 101991...|chr16 903383...|chr17 832574...|chr18 803732...|chr20 644441...|chr19 586176...|chrY 572274...|chr22 508184...|chr21 467099...|chr15_K... 5161414|chr6_GL... 4929269|chr6_GL... 4827813|chr6_GL... 4795265|chr6_GL... 4677643|chr6_GL... 4672374|chr6_GL... 4606388|chr6_GL... 4604811|chr17_K... 2877074|chr16_K... 2659700|chr16_K... 1872759|chr17_... 1821992|chr5_GL... 1612928|chr14_K... 1511111|  `;
document.getElementById('seqs').innerHTML = seqs.split('|').map((row, i) => {
  const [name, len] = row.split(' ');
  return `<tr class="h-5 ${i ? '' : 'bg-[#0a52d2] text-white'}"><td class="border-r border-b border-[#a8a8a8] whitespace-nowrap">${name}</td><td class="border-r border-b border-[#a8a8a8] whitespace-nowrap">${len}</td></tr>`;
}).join('');
</script>
</body>
</html>
